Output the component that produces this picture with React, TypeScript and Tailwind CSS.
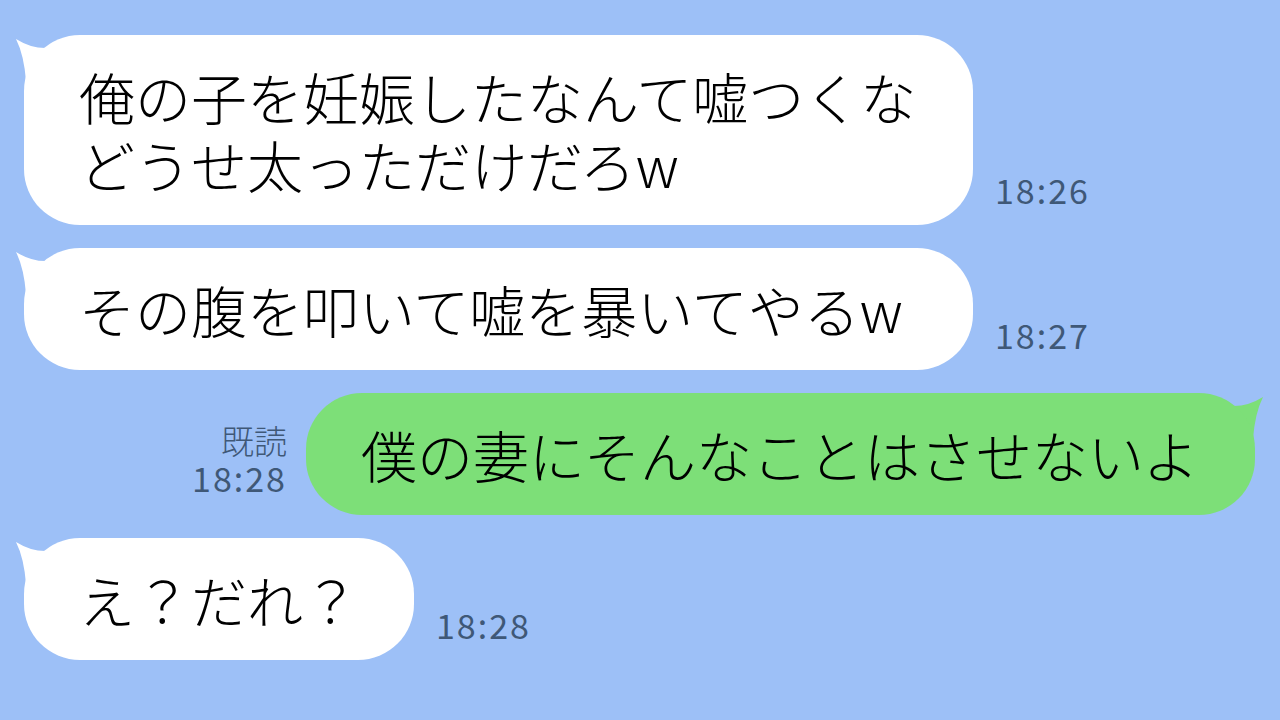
import React from "react";

const jp = { fontFamily: '"Noto Sans CJK JP", "Noto Sans", sans-serif' };

function LeftTail() {
  return (
    <svg className="absolute -left-[10px] top-0" width="50" height="50" viewBox="0 0 50 50">
      <path d="M2 4 Q18 14 34 13 L34 46 L12 46 Q10 20 2 4 Z" fill="#ffffff" />
    </svg>
  );
}

function RightTail() {
  return (
    <svg className="absolute -right-[10px] top-0" width="50" height="50" viewBox="0 0 50 50">
      <path d="M48 4 Q32 14 16 13 L16 46 L38 46 Q40 20 48 4 Z" fill="#7ddf78" />
    </svg>
  );
}

function Time({ children }: { children: React.ReactNode }) {
  return (
    <div className="text-[34px] leading-[36px] tracking-[2px] text-[#3f5877]" style={jp}>
      {children}
    </div>
  );
}

function Incoming({ lines, time, width }: { lines: string[]; time: string; width?: string }) {
  return (
    <div className="flex items-end pl-[24px]">
      <div className="relative">
        <LeftTail />
        <div
          className={
            "relative bg-white rounded-[56px] px-[55px] py-[27px] text-[56px] leading-[68px] font-light text-black whitespace-nowrap " +
            (width ?? "")
          }
          style={jp}
        >
          {lines.map((l) => (
            <div key={l}>{l}</div>
          ))}
        </div>
      </div>
      <div className="ml-[22px] mb-[17px]">
        <Time>{time}</Time>
      </div>
    </div>
  );
}

export default function App() {
  return (
    <div className="w-[1280px] h-[720px] overflow-hidden bg-[#9dc0f7] flex flex-col gap-[23px] pt-[35px]">
      <Incoming
        lines={["俺の子を妊娠したなんて嘘つくな", "どうせ太っただけだろw"]}
        time="18:26"
        width="w-[949px]"
      />
      <Incoming lines={["その腹を叩いて嘘を暴いてやるw"]} time="18:27" width="w-[949px]" />

      <div className="flex items-end justify-end pr-[25px]">
        <div className="flex flex-col items-end mr-[19px] mb-[19px]" style={jp}>
          <div className="text-[33px] leading-[40px] font-light text-[#3f5877]">既読</div>
          <Time>18:28</Time>
        </div>
        <div className="relative">
          <RightTail />
          <div
            className="relative w-[949px] bg-[#7ddf78] rounded-[56px] px-[55px] py-[27px] text-[56px] leading-[68px] font-light text-black whitespace-nowrap"
            style={jp}
          >
            僕の妻にそんなことはさせないよ
          </div>
        </div>
      </div>

      <Incoming lines={["え？だれ？"]} time="18:28" />
    </div>
  );
}
